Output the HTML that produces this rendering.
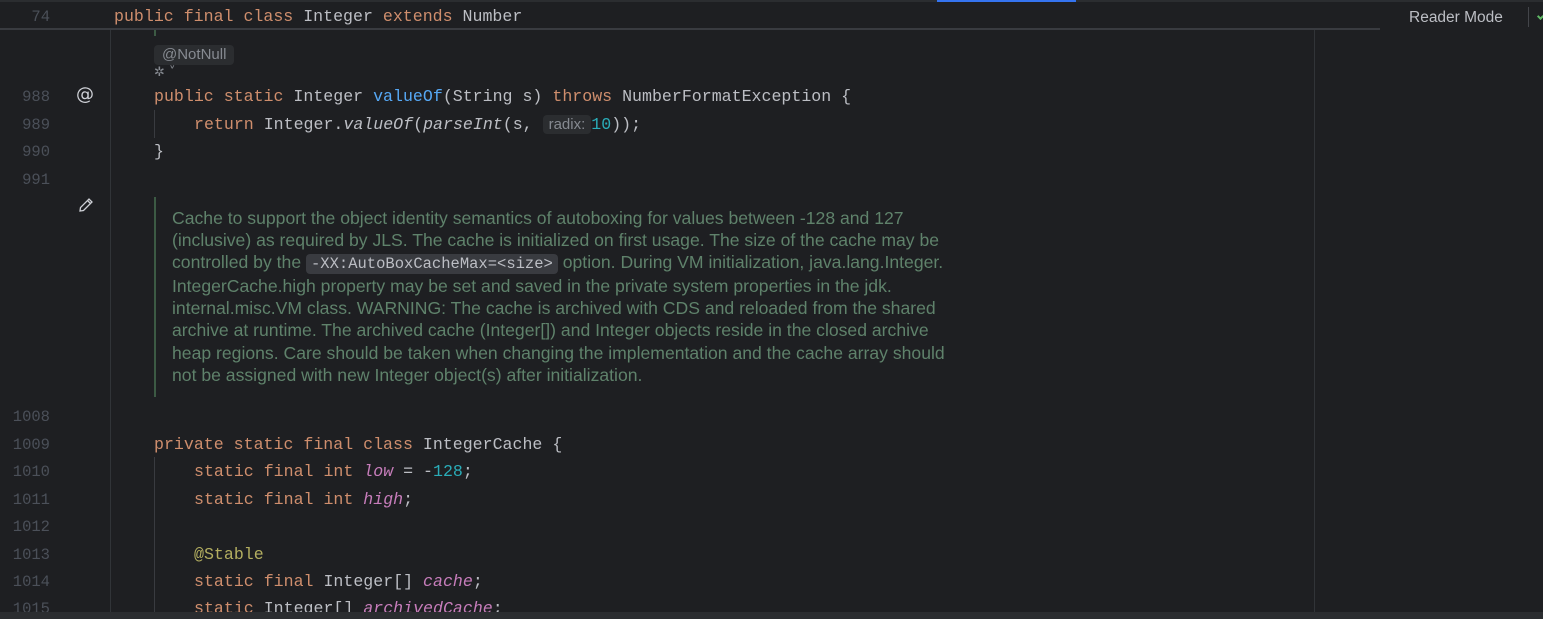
<!DOCTYPE html>
<html><head><meta charset="utf-8"><style>
*{margin:0;padding:0;box-sizing:border-box}
body{width:1543px;height:619px;background:#1e1f22;position:relative;overflow:hidden;font-family:"Liberation Mono",monospace;font-size:16.6px;color:#bcbec4}
.l{position:absolute;white-space:pre;line-height:20px;margin-top:1px}
.n{position:absolute;width:50px;text-align:right;color:#4b5059;white-space:pre;line-height:20px;font-size:15.5px;margin-top:1px}
.k{color:#cf8e6d}.m{color:#56a8f5}.f{color:#c77dbb;font-style:italic}.num{color:#2aacb8}.a{color:#b3ae60}.i{font-style:italic}
.doc{position:absolute;left:172px;top:207px;width:820px;font-family:"Liberation Sans",sans-serif;font-size:17.6px;line-height:22.1px;color:#5f826b;white-space:nowrap}
.code{font-family:"Liberation Mono",monospace;font-size:15.5px;background:#393b40;color:#bcbec4;border-radius:4px;padding:1px 5px}
.hint{font-family:"Liberation Sans",sans-serif;font-size:15px;background:#2b2d30;color:#868a91;border-radius:4px;padding:1px 6px}
</style></head><body>
<div style="position:absolute;left:0;top:0;width:1543px;height:2px;background:#2b2d30"></div>
<div style="position:absolute;left:937px;top:0;width:139px;height:2px;background:#3574f0"></div>
<div style="position:absolute;left:0;top:28px;width:1390px;height:2px;background:#393b40"></div>
<div style="position:absolute;left:110px;top:30px;width:1px;height:582px;background:#313438"></div>
<div style="position:absolute;left:1314px;top:30px;width:1px;height:582px;background:#313438"></div>
<div style="position:absolute;left:1380px;top:2px;width:163px;height:28px;background:#1e1f22"></div>
<div style="position:absolute;left:1409px;top:9px;font-family:'Liberation Sans',sans-serif;font-size:15.5px;color:#bcbec4">Reader Mode</div>
<div style="position:absolute;left:1528px;top:7px;width:1px;height:20px;background:#43454a"></div>
<div style="position:absolute;left:1538px;top:14px;width:5px;height:5px;border-left:2px solid #5fb865;border-bottom:2px solid #5fb865;transform:rotate(-45deg)"></div>

<div class="n" style="top:6px">74</div>
<div class="l" style="left:114px;top:6px"><span class="k">public final class </span>Integer <span class="k">extends </span>Number</div>

<div style="position:absolute;left:154px;top:30px;width:2px;height:6px;background:#3c5a44"></div>
<div style="position:absolute;left:154px;top:45px;font-family:'Liberation Sans',sans-serif;font-size:15px;background:#2b2d30;color:#868a91;border-radius:4px;padding:1px 8px 2px 8px">@NotNull</div>
<div style="position:absolute;left:154px;top:65px;font-size:13px;color:#868a91;font-family:'DejaVu Sans',sans-serif">✲ ˅</div>

<div class="n" style="top:86px">988</div>
<div style="position:absolute;left:76px;top:84px;font-family:'DejaVu Sans',sans-serif;font-size:18px;color:#ced0d6">@</div>
<div class="l" style="left:154px;top:86px"><span class="k">public static </span>Integer <span class="m">valueOf</span>(String s) <span class="k">throws </span>NumberFormatException {</div>
<div style="position:absolute;left:154px;top:110px;width:1px;height:28px;background:#393b40"></div>
<div class="n" style="top:114px">989</div>
<div class="l" style="left:194px;top:114px"><span class="k">return </span>Integer.<span class="i">valueOf</span>(<span class="i">parseInt</span>(s, <span class="hint">radix:</span><span class="num">10</span>));</div>
<div class="n" style="top:141px">990</div>
<div class="l" style="left:154px;top:141px">}</div>
<div class="n" style="top:169px">991</div>

<svg style="position:absolute;left:77px;top:196px" width="18" height="18" viewBox="0 0 18 18"><path d="M3 15 L3.5 11.5 L12 3 L15 6 L6.5 14.5 Z M10.5 4.5 L13.5 7.5" fill="none" stroke="#ced0d6" stroke-width="1.3"/></svg>
<div style="position:absolute;left:154px;top:197px;width:2px;height:200px;background:#3c5a44"></div>
<div class="doc">Cache to support the object identity semantics of autoboxing for values between -128 and 127<br>(inclusive) as required by JLS. The cache is initialized on first usage. The size of the cache may be<br>controlled by the <span class="code">-XX:AutoBoxCacheMax=&lt;size&gt;</span> option. During VM initialization, java.lang.Integer.<br>IntegerCache.high property may be set and saved in the private system properties in the jdk.<br>internal.misc.VM class. WARNING: The cache is archived with CDS and reloaded from the shared<br>archive at runtime. The archived cache (Integer[]) and Integer objects reside in the closed archive<br>heap regions. Care should be taken when changing the implementation and the cache array should<br>not be assigned with new Integer object(s) after initialization.</div>

<div class="n" style="top:406px">1008</div>
<div class="n" style="top:434px">1009</div>
<div class="l" style="left:154px;top:434px"><span class="k">private static final class </span>IntegerCache {</div>
<div style="position:absolute;left:154px;top:457px;width:1px;height:155px;background:#393b40"></div>
<div class="n" style="top:461px">1010</div>
<div class="l" style="left:194px;top:461px"><span class="k">static final int </span><span class="f">low</span> = -<span class="num">128</span>;</div>
<div class="n" style="top:489px">1011</div>
<div class="l" style="left:194px;top:489px"><span class="k">static final int </span><span class="f">high</span>;</div>
<div class="n" style="top:516px">1012</div>
<div class="n" style="top:544px">1013</div>
<div class="l" style="left:194px;top:544px"><span class="a">@Stable</span></div>
<div class="n" style="top:571px">1014</div>
<div class="l" style="left:194px;top:571px"><span class="k">static final </span>Integer[] <span class="f">cache</span>;</div>
<div class="n" style="top:598px">1015</div>
<div class="l" style="left:194px;top:598px"><span class="k">static </span>Integer[] <span class="f">archivedCache</span>;</div>
<div style="position:absolute;left:0;top:612px;width:1543px;height:7px;background:#2b2d30"></div>
</body></html>
